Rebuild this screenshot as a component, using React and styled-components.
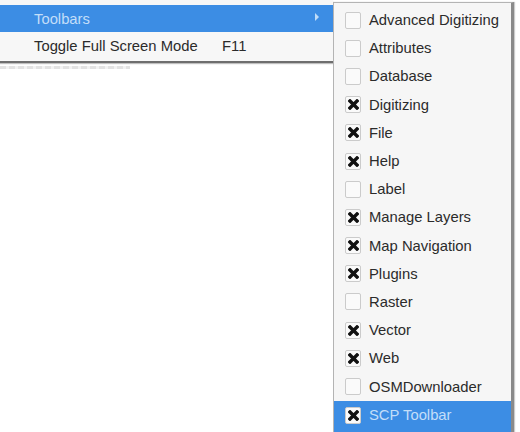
import React from "react";
import styled, { createGlobalStyle } from "styled-components";

const GlobalStyle = createGlobalStyle`
  html, body {
    margin: 0;
    padding: 0;
    background: #ffffff;
  }
  body {
    font-family: "Liberation Sans", Arial, sans-serif;
  }
`;

const Screen = styled.div`
  width: 520px;
  height: 432px;
  overflow: hidden;
  display: flex;
  align-items: flex-start;
  background: #ffffff;
  font-size: 14.8px;
  color: #2b2b2b;
`;

const MenuColumn = styled.div`
  width: 333px;
  display: flex;
  flex-direction: column;
`;

const MainMenu = styled.div`
  background: #f7f7f7;
  padding-top: 5px;
  padding-bottom: 2px;
  border-bottom: 2px solid #6e6e6e;
  box-shadow: 0 1px 1px rgba(0, 0, 0, 0.25);
`;

const Residue = styled.div`
  margin-top: 3px;
  width: 130px;
  height: 3px;
  background: repeating-linear-gradient(
    90deg,
    #e2e2e2 0 6px,
    #f2f2f2 6px 9px
  );
`;

const MainItem = styled.div`
  height: 27px;
  display: flex;
  align-items: center;
  padding-left: 34px;
  padding-right: 14px;
  background: ${(p) => (p.active ? "#3c8de4" : "transparent")};
  color: ${(p) => (p.active ? "#c3def9" : "#2b2b2b")};
`;

const Label = styled.span`
  flex: ${(p) => (p.grow ? 1 : "none")};
  width: ${(p) => (p.width ? p.width + "px" : "auto")};
  white-space: nowrap;
`;

const Arrow = styled.span`
  width: 0;
  height: 0;
  border-top: 4px solid transparent;
  border-bottom: 4px solid transparent;
  border-left: 4px solid #bfdcf8;
  margin-bottom: 3px;
`;

const SubMenu = styled.div`
  margin-top: 2px;
  width: 177px;
  background: #f6f6f6;
  border: 1px solid #b4b4b4;
  border-right: 3px solid #8a8a8a;
  padding-top: 3px;
  box-shadow: 1px 0 1px rgba(0, 0, 0, 0.2);
`;

const SubItem = styled.div`
  height: ${(p) => (p.active ? "34px" : "28.2px")};
  display: flex;
  align-items: ${(p) => (p.active ? "flex-start" : "center")};
  padding-top: ${(p) => (p.active ? "6px" : "0")};
  box-sizing: border-box;
  gap: 8px;
  padding-left: 11px;
  background: ${(p) => (p.active ? "#3c8de4" : "transparent")};
  color: ${(p) => (p.active ? "#c3def9" : "#2b2b2b")};
  white-space: nowrap;
`;

const Box = styled.span`
  width: 16px;
  height: 17px;
  box-sizing: border-box;
  border: 1px solid #cbcbcb;
  border-radius: 2px;
  background: #fafafa;
  display: flex;
  align-items: center;
  justify-content: center;
  flex: none;
`;

function CheckMark() {
  return (
    <svg width="11" height="11" viewBox="0 0 11 11">
      <path
        d="M2 2 L9 9 M9 2 L2 9"
        stroke="#111"
        strokeWidth="3.4"
        strokeLinecap="square"
      />
    </svg>
  );
}

const toolbars = [
  { name: "Advanced Digitizing", on: false },
  { name: "Attributes", on: false },
  { name: "Database", on: false },
  { name: "Digitizing", on: true },
  { name: "File", on: true },
  { name: "Help", on: true },
  { name: "Label", on: false },
  { name: "Manage Layers", on: true },
  { name: "Map Navigation", on: true },
  { name: "Plugins", on: true },
  { name: "Raster", on: false },
  { name: "Vector", on: true },
  { name: "Web", on: true },
  { name: "OSMDownloader", on: false },
  { name: "SCP Toolbar", on: true, active: true },
];

export default function App() {
  return (
    <>
      <GlobalStyle />
      <Screen>
        <MenuColumn>
          <MainMenu>
            <MainItem active>
              <Label grow>Toolbars</Label>
              <Arrow />
            </MainItem>
            <MainItem>
              <Label width={188}>Toggle Full Screen Mode</Label>
              <Label>F11</Label>
            </MainItem>
          </MainMenu>
          <Residue />
        </MenuColumn>
        <SubMenu>
          {toolbars.map((t) => (
            <SubItem key={t.name} active={t.active}>
              <Box>{t.on && <CheckMark />}</Box>
              {t.name}
            </SubItem>
          ))}
        </SubMenu>
      </Screen>
    </>
  );
}
